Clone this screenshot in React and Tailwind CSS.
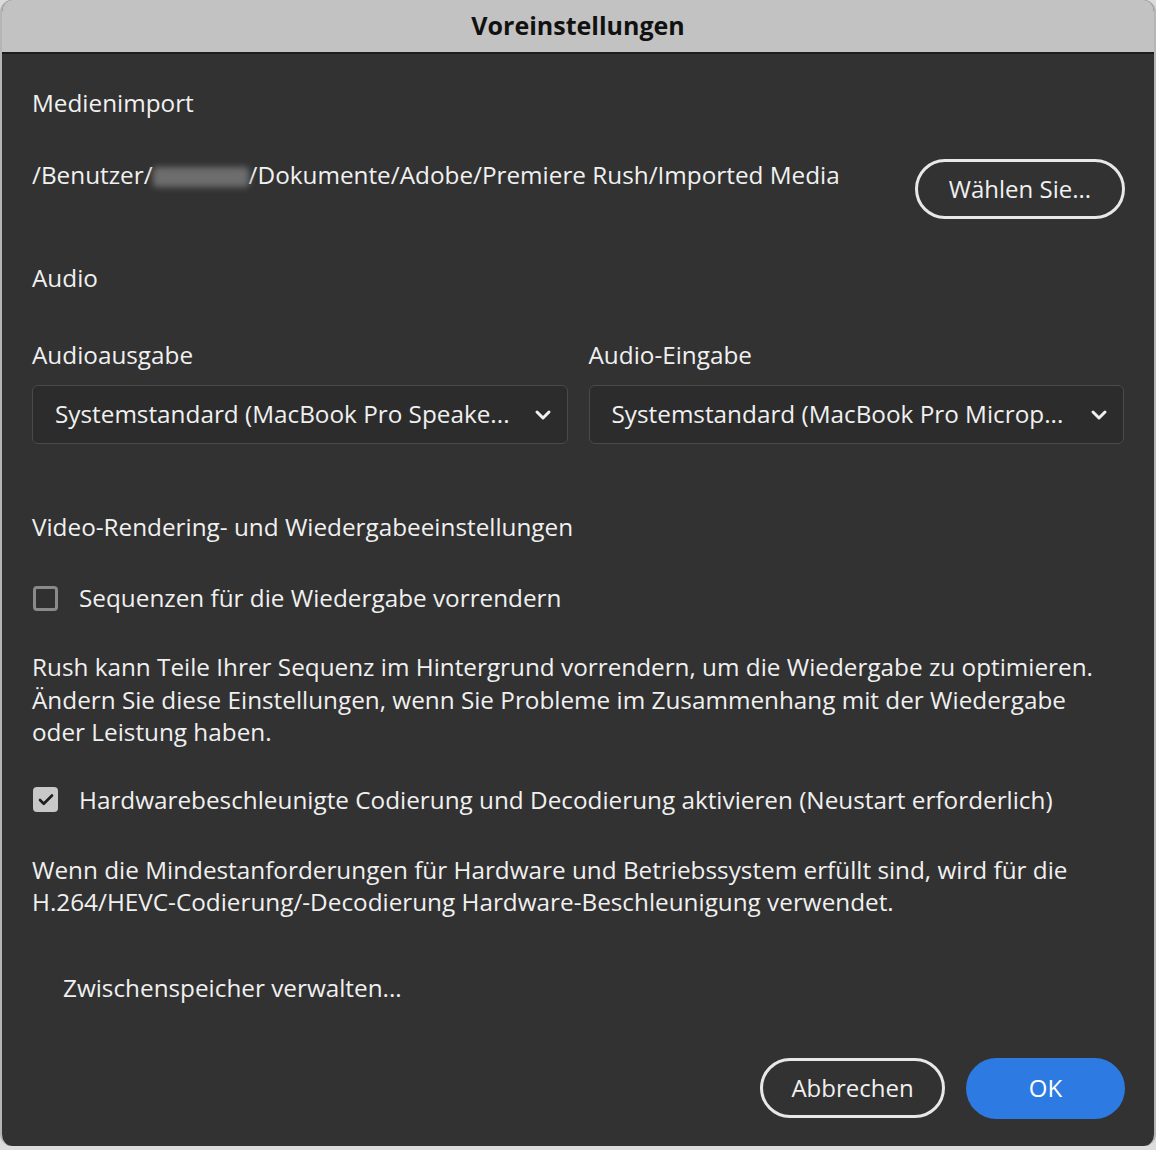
import { ChevronDown, Check } from "lucide-react";

const font = { fontFamily: '"Open Sans", "Noto Sans", sans-serif' };

function Select({ value }) {
  return (
    <div className="flex h-[59px] items-center justify-between rounded-md border border-[#4a4a4a] bg-[#2c2c2c] pl-[22px] pr-[12px]">
      <span className="text-[24.3px] font-medium text-[#f0f0f0]">{value}</span>
      <ChevronDown size={24} strokeWidth={3} className="text-[#f0f0f0]" />
    </div>
  );
}

export default function App() {
  return (
    <div className="h-[1150px] w-[1156px] bg-[#dcdcdc] pb-[4px]" style={font}>
      <div className="flex h-full flex-col overflow-hidden rounded-[12px] border-x-2 border-[#b5b5b5] bg-[#323232]">
        {/* title bar */}
        <div className="flex h-[54px] shrink-0 items-center justify-center border-b-2 border-[#1c1c1c] bg-[#c2c2c2]">
          <span className="text-[25px] font-bold text-[#111]">Voreinstellungen</span>
        </div>

        <div className="flex flex-1 flex-col px-[30px] text-[24.3px] font-medium text-[#f0f0f0]">
          <div className="mt-[32px] leading-[34px]">Medienimport</div>

          <div className="mt-[38px] flex items-start justify-between">
            <div className="whitespace-nowrap leading-[34px]">
              /Benutzer/
              <span className="inline-block h-[20px] w-[96px] translate-y-[3px] rounded bg-[#6d6d6d] blur-[3px]" />
              /Dokumente/Adobe/Premiere Rush/Imported Media
            </div>
            <button className="mr-[-1px] mt-[1px] h-[60px] w-[210px] shrink-0 rounded-full border-[3px] border-[#e8e8e8] text-[24px] text-[#f0f0f0]">
              Wählen Sie...
            </button>
          </div>

          <div className="mt-[42px] leading-[34px]">Audio</div>

          <div className="mt-[43px] grid grid-cols-2 gap-x-[21px]">
            <div className="flex flex-col gap-[13px]">
              <div className="leading-[34px]">Audioausgabe</div>
              <Select value="Systemstandard (MacBook Pro Speake..." />
            </div>
            <div className="flex flex-col gap-[13px]">
              <div className="leading-[34px]">Audio-Eingabe</div>
              <Select value="Systemstandard (MacBook Pro Microp..." />
            </div>
          </div>

          <div className="mt-[66px] leading-[34px]">Video-Rendering- und Wiedergabeeinstellungen</div>

          <div className="mt-[37px] flex items-center gap-[21px]">
            <div className="ml-[1px] h-[25px] w-[25px] rounded-[4px] border-[3px] border-[#8a8a8a] bg-[#303030]" />
            <span className="leading-[34px]">Sequenzen für die Wiedergabe vorrendern</span>
          </div>

          <p className="mt-[36px] whitespace-nowrap leading-[32.5px]">
            Rush kann Teile Ihrer Sequenz im Hintergrund vorrendern, um die Wiedergabe zu optimieren.
            <br />
            Ändern Sie diese Einstellungen, wenn Sie Probleme im Zusammenhang mit der Wiedergabe
            <br />
            oder Leistung haben.
          </p>

          <div className="mt-[34px] flex items-center gap-[21px]">
            <div className="ml-[1px] flex h-[25px] w-[25px] items-center justify-center rounded-[4px] bg-[#c8c8c8]">
              <Check size={18} strokeWidth={3.5} className="text-[#1e1e1e]" />
            </div>
            <span className="whitespace-nowrap leading-[34px]">
              Hardwarebeschleunigte Codierung und Decodierung aktivieren (Neustart erforderlich)
            </span>
          </div>

          <p className="mt-[37px] whitespace-nowrap leading-[32.5px]">
            Wenn die Mindestanforderungen für Hardware und Betriebssystem erfüllt sind, wird für die
            <br />
            H.264/HEVC-Codierung/-Decodierung Hardware-Beschleunigung verwendet.
          </p>

          <div className="ml-[31px] mt-[52px] leading-[34px]">Zwischenspeicher verwalten...</div>

          <div className="mt-[53px] flex justify-end gap-[21px]">
            <button className="h-[60px] w-[185px] rounded-full border-[3px] border-[#e8e8e8] text-[24px] text-[#f0f0f0]">
              Abbrechen
            </button>
            <button className="mr-[-1px] h-[61px] w-[159px] rounded-full bg-[#2d7be2] text-[24px] text-white">
              OK
            </button>
          </div>
        </div>
      </div>
    </div>
  );
}
